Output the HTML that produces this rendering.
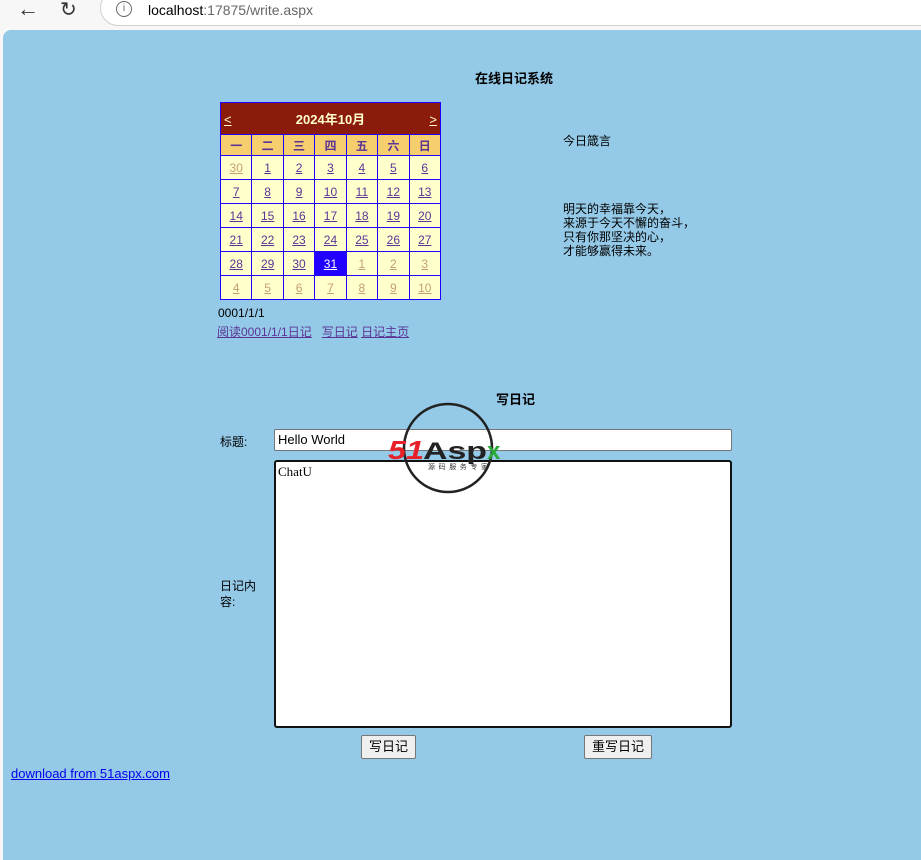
<!DOCTYPE html>
<html><head><meta charset="utf-8"><style>
body{margin:0;width:921px;height:848px;background:#f7f7f7;position:relative;overflow:hidden;font-family:"Liberation Sans","Noto Sans CJK SC",sans-serif;font-size:12px;color:#000}
.a{position:absolute}
#page{left:3px;top:30px;width:930px;height:830px;background:#94c9e7;border-radius:8px 0 0 0}
#url{left:100px;top:-10px;width:840px;height:34px;background:#fff;border:1px solid #d0d0d0;border-radius:18px}
table.cal{position:absolute;left:220px;top:102px;border-collapse:collapse;width:221px}
.cal td{border:1px solid #2200ff;text-align:center;padding:0;height:23px;background:#ffffcc;font-size:12px}
.cal td a{color:#5a3596;text-decoration:underline}
.cal td.o a{color:#c4a071}
.cal tr.h td{background:#8b1c0c;color:#ffffcc;font-weight:bold;font-size:13px;height:31px}
.cal tr.d td{background:#f7ce6e;color:#5a3596;height:20px;font-weight:bold}
.cal td.s{background:#2200ff}.cal td.s a{color:#fff}
a{color:#5a3596;text-decoration:underline}
.btn{position:absolute;height:22px;background:#efefef;border:1px solid #767676;border-radius:2px;font-size:13px;text-align:center;line-height:22px}
</style></head><body>
<div class="a" id="url"></div>
<div class="a" style="left:17px;top:-4px;font-size:22px;color:#333">←</div>
<div class="a" style="left:60px;top:-3px;font-size:20px;color:#333">↻</div>
<div class="a" style="left:116px;top:1px;width:14px;height:14px;border:1.5px solid #666;border-radius:50%;font-size:10px;text-align:center;line-height:14px;color:#666">i</div>
<div class="a" style="left:148px;top:2px;font-size:14px;color:#000">localhost<span style="color:#666">:17875/write.aspx</span></div>
<div class="a" id="page"></div>
<div class="a" style="left:475px;top:68px;font-weight:bold;font-size:13px">在线日记系统</div>
<table class="cal">
<tr class="h"><td colspan="7" style="position:relative"><span style="position:absolute;left:3px;top:9px;text-decoration:underline;font-weight:normal">&lt;</span>2024年10月<span style="position:absolute;right:3px;top:9px;text-decoration:underline;font-weight:normal">&gt;</span></td></tr>
<tr class="d"><td>一</td><td>二</td><td>三</td><td>四</td><td>五</td><td>六</td><td>日</td></tr>
<tr><td class="o"><a>30</a></td><td><a>1</a></td><td><a>2</a></td><td><a>3</a></td><td><a>4</a></td><td><a>5</a></td><td><a>6</a></td></tr>
<tr><td><a>7</a></td><td><a>8</a></td><td><a>9</a></td><td><a>10</a></td><td><a>11</a></td><td><a>12</a></td><td><a>13</a></td></tr>
<tr><td><a>14</a></td><td><a>15</a></td><td><a>16</a></td><td><a>17</a></td><td><a>18</a></td><td><a>19</a></td><td><a>20</a></td></tr>
<tr><td><a>21</a></td><td><a>22</a></td><td><a>23</a></td><td><a>24</a></td><td><a>25</a></td><td><a>26</a></td><td><a>27</a></td></tr>
<tr><td><a>28</a></td><td><a>29</a></td><td><a>30</a></td><td class="s"><a>31</a></td><td class="o"><a>1</a></td><td class="o"><a>2</a></td><td class="o"><a>3</a></td></tr>
<tr><td class="o"><a>4</a></td><td class="o"><a>5</a></td><td class="o"><a>6</a></td><td class="o"><a>7</a></td><td class="o"><a>8</a></td><td class="o"><a>9</a></td><td class="o"><a>10</a></td></tr>
</table>
<div class="a" style="left:218px;top:306px">0001/1/1</div>
<div class="a" style="left:217px;top:323px"><a>阅读0001/1/1日记</a>&nbsp;&nbsp;&nbsp;<a>写日记</a> <a>日记主页</a></div>
<div class="a" style="left:563px;top:132px">今日箴言</div>
<div class="a" style="left:563px;top:202px;line-height:14px">明天的幸福靠今天，<br>来源于今天不懈的奋斗，<br>只有你那坚决的心，<br>才能够赢得未来。</div>
<div class="a" style="left:496px;top:389px;font-weight:bold;font-size:13px">写日记</div>
<div class="a" style="left:220px;top:433px">标题:</div>
<div class="a" style="left:274px;top:429px;width:453px;height:20px;background:#fff;border:1px solid #767676;border-radius:2px;font-size:13px;line-height:20px;padding-left:3px">Hello World</div>
<div class="a" style="left:274px;top:460px;width:452px;height:262px;background:#fff;border:2px solid #111;border-radius:3px;font-family:'Liberation Serif',serif;font-size:13px;padding:2px 0 0 2px">ChatU</div>
<div class="a" style="left:220px;top:578px;line-height:16px">日记内<br>容:</div>
<div class="btn" style="left:361px;top:735px;width:53px">写日记</div>
<div class="btn" style="left:584px;top:735px;width:66px">重写日记</div>
<div class="a" style="left:11px;top:766px;font-size:13px"><a style="color:#0000ee">download from 51aspx.com</a></div>
<svg class="a" style="left:386px;top:402px" width="130" height="92">
<circle cx="62" cy="46" r="44" fill="none" stroke="#222" stroke-width="2.5"/>
<text x="2" y="57" font-family="Liberation Sans" font-weight="bold" font-style="italic" font-size="26" fill="#e8202a" textLength="36" lengthAdjust="spacingAndGlyphs">51</text>
<text x="37" y="57" font-family="Liberation Sans" font-weight="bold" font-size="24" fill="#222" textLength="64" lengthAdjust="spacingAndGlyphs">Asp</text>
<text x="101" y="57" font-family="Liberation Sans" font-weight="bold" font-size="24" fill="#2aa838">x</text>
<text x="42" y="67" font-family="Noto Sans CJK SC" font-size="7" fill="#333" textLength="60">源码服务专家</text>
</svg>
</body></html>
